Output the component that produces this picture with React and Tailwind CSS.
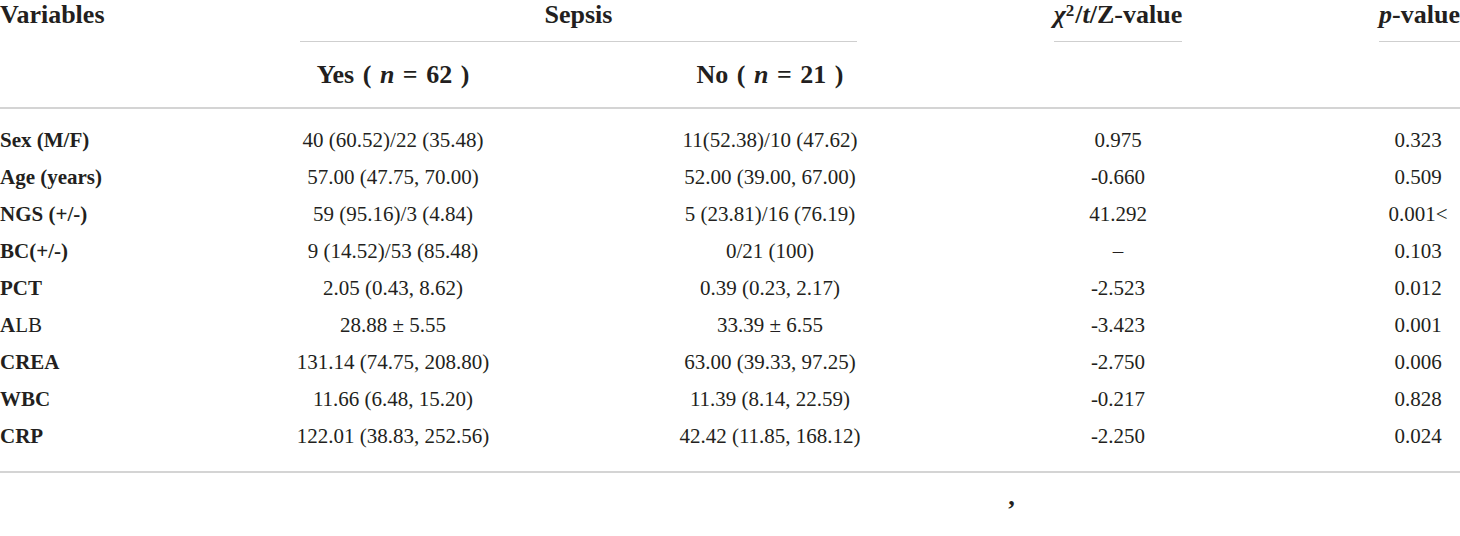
import React from "react";

const COLS = "grid grid-cols-[300px_186px_197px_174px_161px_200px_158px_84px]";

const rows = [
  [<b>Sex (M/F)</b>, "40 (60.52)/22 (35.48)", "11(52.38)/10 (47.62)", "0.975", "0.323"],
  [<b>Age (years)</b>, "57.00 (47.75, 70.00)", "52.00 (39.00, 67.00)", "-0.660", "0.509"],
  [<b>NGS (+/-)</b>, "59 (95.16)/3 (4.84)", "5 (23.81)/16 (76.19)", "41.292", "0.001<"],
  [<b>BC(+/-)</b>, "9 (14.52)/53 (85.48)", "0/21 (100)", "–", "0.103"],
  [<b>PCT</b>, "2.05 (0.43, 8.62)", "0.39 (0.23, 2.17)", "-2.523", "0.012"],
  [<span><b>A</b>LB</span>, "28.88 ± 5.55", "33.39 ± 6.55", "-3.423", "0.001"],
  [<b>CREA</b>, "131.14 (74.75, 208.80)", "63.00 (39.33, 97.25)", "-2.750", "0.006"],
  [<b>WBC</b>, "11.66 (6.48, 15.20)", "11.39 (8.14, 22.59)", "-0.217", "0.828"],
  [<b>CRP</b>, "122.01 (38.83, 252.56)", "42.42 (11.85, 168.12)", "-2.250", "0.024"],
];

export default function App() {
  return (
    <div
      className="w-[1460px] h-[536px] bg-white text-[#231f20] overflow-hidden"
      style={{ fontFamily: '"Liberation Serif", "Times New Roman", serif' }}
    >
      {/* header row 1 */}
      <div className={`${COLS} text-[26px] font-bold leading-[30px]`}>
        <div className="col-start-1 whitespace-nowrap">Variables</div>
        <div className="col-start-2 col-span-3 text-center pb-[11px] border-b border-[#cfcfcf]">
          Sepsis
        </div>
        <div className="col-start-6 flex justify-center">
          <span className="inline-block whitespace-nowrap pb-[11px] border-b border-[#cfcfcf] h-[42px]">
            <i>χ</i>
            <sup className="text-[17px] relative -top-[7px] mr-[1px]">2</sup>
            /<i>t</i>/Z-value
          </span>
        </div>
        <div className="col-start-8 flex justify-end">
          <span className="inline-block whitespace-nowrap pb-[11px] border-b border-[#cfcfcf] h-[42px]">
            <i>p</i>-value
          </span>
        </div>
      </div>

      {/* header row 2 */}
      <div className={`${COLS} text-[26px] font-bold leading-[30px] pt-[18px] pb-[17px] border-b-2 border-[#d4d4d4]`}>
        <div className="col-start-2 text-center whitespace-nowrap [word-spacing:2px]">
          Yes ( <i>n</i> = 62 )
        </div>
        <div className="col-start-4 text-center whitespace-nowrap [word-spacing:2px]">
          No ( <i>n</i> = 21 )
        </div>
      </div>

      {/* body */}
      <div className="pt-[13px] pb-[16px] border-b-2 border-[#d4d4d4] text-[21px]">
        {rows.map((r, i) => (
          <div key={i} className={`${COLS} h-[37px] leading-[37px] whitespace-nowrap`}>
            <div className="col-start-1">{r[0]}</div>
            <div className="col-start-2 flex justify-center">
              <span>{r[1]}</span>
            </div>
            <div className="col-start-4 flex justify-center">
              <span>{r[2]}</span>
            </div>
            <div className="col-start-6 flex justify-center">
              <span>{r[3]}</span>
            </div>
            <div className="col-start-8 flex justify-center">
              <span>{r[4]}</span>
            </div>
          </div>
        ))}
      </div>

      <div className="pl-[1007px] pt-[24px] text-[26px] leading-[26px] font-bold">’</div>
    </div>
  );
}
